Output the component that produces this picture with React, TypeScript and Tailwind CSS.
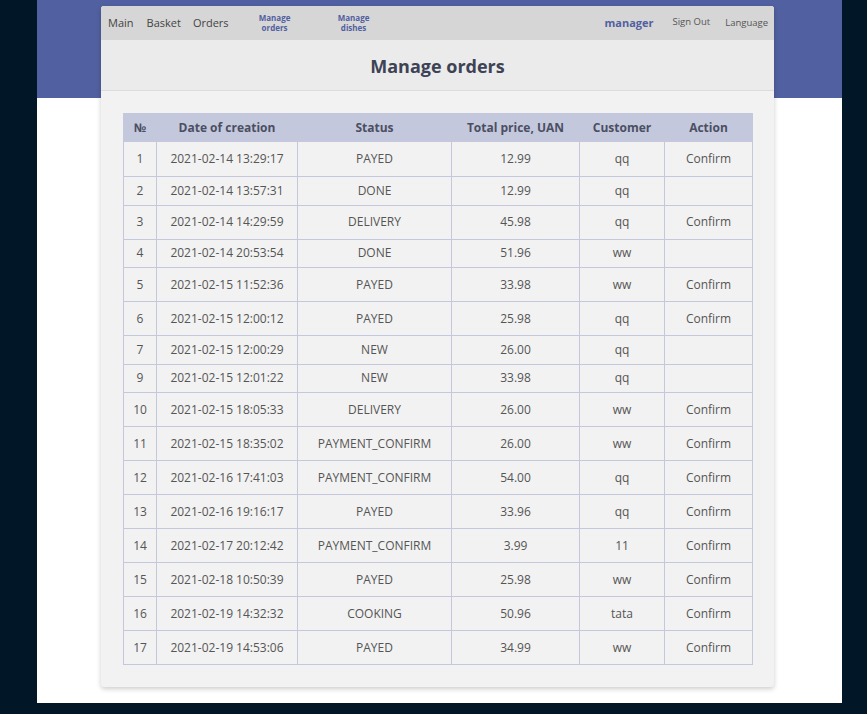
import React from "react";

type Order = {
  id: number;
  date: string;
  status: string;
  price: string;
  customer: string;
  confirm: boolean;
};

const orders: Order[] = [
  { id: 1, date: "2021-02-14 13:29:17", status: "PAYED", price: "12.99", customer: "qq", confirm: true },
  { id: 2, date: "2021-02-14 13:57:31", status: "DONE", price: "12.99", customer: "qq", confirm: false },
  { id: 3, date: "2021-02-14 14:29:59", status: "DELIVERY", price: "45.98", customer: "qq", confirm: true },
  { id: 4, date: "2021-02-14 20:53:54", status: "DONE", price: "51.96", customer: "ww", confirm: false },
  { id: 5, date: "2021-02-15 11:52:36", status: "PAYED", price: "33.98", customer: "ww", confirm: true },
  { id: 6, date: "2021-02-15 12:00:12", status: "PAYED", price: "25.98", customer: "qq", confirm: true },
  { id: 7, date: "2021-02-15 12:00:29", status: "NEW", price: "26.00", customer: "qq", confirm: false },
  { id: 9, date: "2021-02-15 12:01:22", status: "NEW", price: "33.98", customer: "qq", confirm: false },
  { id: 10, date: "2021-02-15 18:05:33", status: "DELIVERY", price: "26.00", customer: "ww", confirm: true },
  { id: 11, date: "2021-02-15 18:35:02", status: "PAYMENT_CONFIRM", price: "26.00", customer: "ww", confirm: true },
  { id: 12, date: "2021-02-16 17:41:03", status: "PAYMENT_CONFIRM", price: "54.00", customer: "qq", confirm: true },
  { id: 13, date: "2021-02-16 19:16:17", status: "PAYED", price: "33.96", customer: "qq", confirm: true },
  { id: 14, date: "2021-02-17 20:12:42", status: "PAYMENT_CONFIRM", price: "3.99", customer: "11", confirm: true },
  { id: 15, date: "2021-02-18 10:50:39", status: "PAYED", price: "25.98", customer: "ww", confirm: true },
  { id: 16, date: "2021-02-19 14:32:32", status: "COOKING", price: "50.96", customer: "tata", confirm: true },
  { id: 17, date: "2021-02-19 14:53:06", status: "PAYED", price: "34.99", customer: "ww", confirm: true },
];

const cell = "border border-[#c5c8dc] text-center";

const App: React.FC = () => {
  return (
    <div className="min-h-screen bg-[#011627] font-['Open_Sans',sans-serif]">
      <div className="ml-[37px] w-[805px] h-[703px] pt-[6px] bg-[linear-gradient(#5160a0_0,#5160a0_98px,#ffffff_98px)]">
        <div className="ml-[64px] w-[673px] bg-[#f2f2f2] rounded-[3px] shadow-[0_2px_5px_rgba(0,0,0,0.2)] overflow-hidden">
          {/* nav */}
          <div className="h-[34px] bg-[#d6d6d6] flex items-center pl-[7px] pr-[6px] text-[#444]">
            <span className="text-[11px]">Main</span>
            <span className="text-[11px] ml-[13px]">Basket</span>
            <span className="text-[11px] ml-[12px]">Orders</span>
            <span className="text-[8px] font-bold leading-[10px] text-center text-[#5160a0] ml-[27px] w-[38px]">
              Manage
              <br />
              orders
            </span>
            <span className="text-[8px] font-bold leading-[10px] text-center text-[#5160a0] ml-[41px] w-[38px]">
              Manage
              <br />
              dishes
            </span>
            <span className="ml-auto text-[11px] font-bold text-[#5160a0]">manager</span>
            <span className="text-[9.5px] ml-[19px] text-[#555] -mt-[1px]">Sign Out</span>
            <span className="text-[9.5px] ml-[15px] text-[#555]">Language</span>
          </div>
          {/* header */}
          <div className="h-[51px] pt-[3px] bg-[#ebebeb] border-b border-[#dcdcdc] flex items-center justify-center">
            <h1 className="text-[18px] font-bold text-[#3d4255]">Manage orders</h1>
          </div>
          {/* body */}
          <div className="px-[22px] pt-[22px] pb-[22px]">
            <table className="w-[629px] border-collapse table-fixed text-[12px] text-[#555]">
              <colgroup>
                <col className="w-[33px]" />
                <col className="w-[141px]" />
                <col className="w-[154px]" />
                <col className="w-[128px]" />
                <col className="w-[85px]" />
                <col className="w-[88px]" />
              </colgroup>
              <thead>
                <tr className="h-[28px] bg-[#c4c8dc] text-[#4b4f63] font-bold">
                  <th className={cell}>№</th>
                  <th className={cell}>Date of creation</th>
                  <th className={cell}>Status</th>
                  <th className={cell}>Total price, UAN</th>
                  <th className={cell}>Customer</th>
                  <th className={cell}>Action</th>
                </tr>
              </thead>
              <tbody>
                {orders.map((o, i) => (
                  <tr
                    key={o.id}
                    className={i === 0 ? "h-[35px]" : o.confirm ? "h-[34px]" : "h-[28.5px]"}
                  >
                    <td className={cell}>{o.id}</td>
                    <td className={cell}>{o.date}</td>
                    <td className={cell}>{o.status}</td>
                    <td className={cell}>{o.price}</td>
                    <td className={cell}>{o.customer}</td>
                    <td className={cell}>{o.confirm ? "Confirm" : ""}</td>
                  </tr>
                ))}
              </tbody>
            </table>
          </div>
        </div>
      </div>
    </div>
  );
};

export default App;
